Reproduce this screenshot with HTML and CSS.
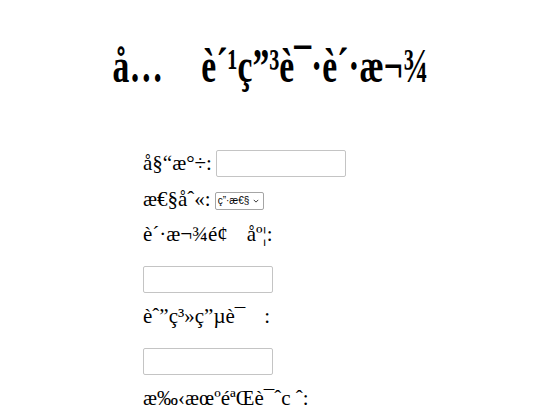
FILE: index.html
```html
<!DOCTYPE html>
<html>
<head>
<meta charset="utf-8">
<link rel="stylesheet" href="styles.css">
</head>
<body>
<h1 class="title"><span class="title-text">å…<span class="gap gap-title"></span>è´¹ç”³è¯·è´·æ¬¾</span></h1>
<form class="form">
  <div class="row row-name">
    <label class="label">å§“æ°÷:</label>
    <input class="field" type="text">
  </div>
  <div class="row row-sex">
    <label class="label">æ€§åˆ«:</label>
    <div class="select"><span class="select-text">ç”·æ€§</span><svg class="chev" viewBox="0 0 8 5" width="6" height="4"><path d="M1 1 L4 4 L7 1" fill="none" stroke="#333" stroke-width="1.3"/></svg></div>
  </div>
  <div class="row">
    <label class="label">è´·æ¬¾é¢<span class="gap"></span>åº¦:</label>
  </div>
  <div class="row row-input">
    <input class="field" type="text">
  </div>
  <div class="row">
    <label class="label">èˆ”ç³»ç”µè¯<span class="gap"></span>:</label>
  </div>
  <div class="row row-input">
    <input class="field" type="text">
  </div>
  <div class="row">
    <label class="label">æ‰‹æœºéªŒè¯ˆç ˆ:</label>
  </div>
</form>
</body>
</html>
```
FILE: styles.css
```css
html, body {
  margin: 0;
  padding: 0;
  background: #ffffff;
}

body {
  font-family: "Liberation Serif", "Times New Roman", serif;
  color: #000000;
  width: 540px;
  height: 405px;
  overflow: hidden;
}

.title {
  margin: 0;
  padding-top: 38px;
  height: 68px;
  text-align: center;
  font-size: 48px;
  font-weight: bold;
  line-height: 55px;
}

.title-text {
  display: inline-block;
  transform: scaleX(0.7);
  transform-origin: center;
  white-space: nowrap;
}

.gap {
  display: inline-block;
  width: 0.9em;
}

.gap-title {
  width: 1.14em;
}

.form {
  width: 254px;
  margin: 44px auto 0;
  display: flex;
  flex-direction: column;
  font-size: 21px;
  line-height: 23px;
}

.row {
  display: flex;
  align-items: center;
  gap: 4px;
  margin-top: 12px;
}

.row-name {
  margin-top: 0;
  height: 27px;
}

.row-sex {
  margin-top: 11px;
}

.row-input {
  margin-top: 20px;
}

.label {
  white-space: nowrap;
}

.field {
  box-sizing: border-box;
  width: 130px;
  height: 27px;
  margin: 0;
  border: 1px solid #c4c4c4;
  border-radius: 2px;
  background: #ffffff;
}

.select {
  box-sizing: border-box;
  width: 49px;
  height: 18px;
  border: 1px solid #a5a5a5;
  border-radius: 2px;
  display: flex;
  align-items: center;
  justify-content: space-between;
  padding: 0 4px 0 2px;
  font-family: "Liberation Sans", Arial, sans-serif;
  font-size: 10px;
  line-height: 16px;
  margin-top: 2px;
}

.chev {
  display: block;
}
```
